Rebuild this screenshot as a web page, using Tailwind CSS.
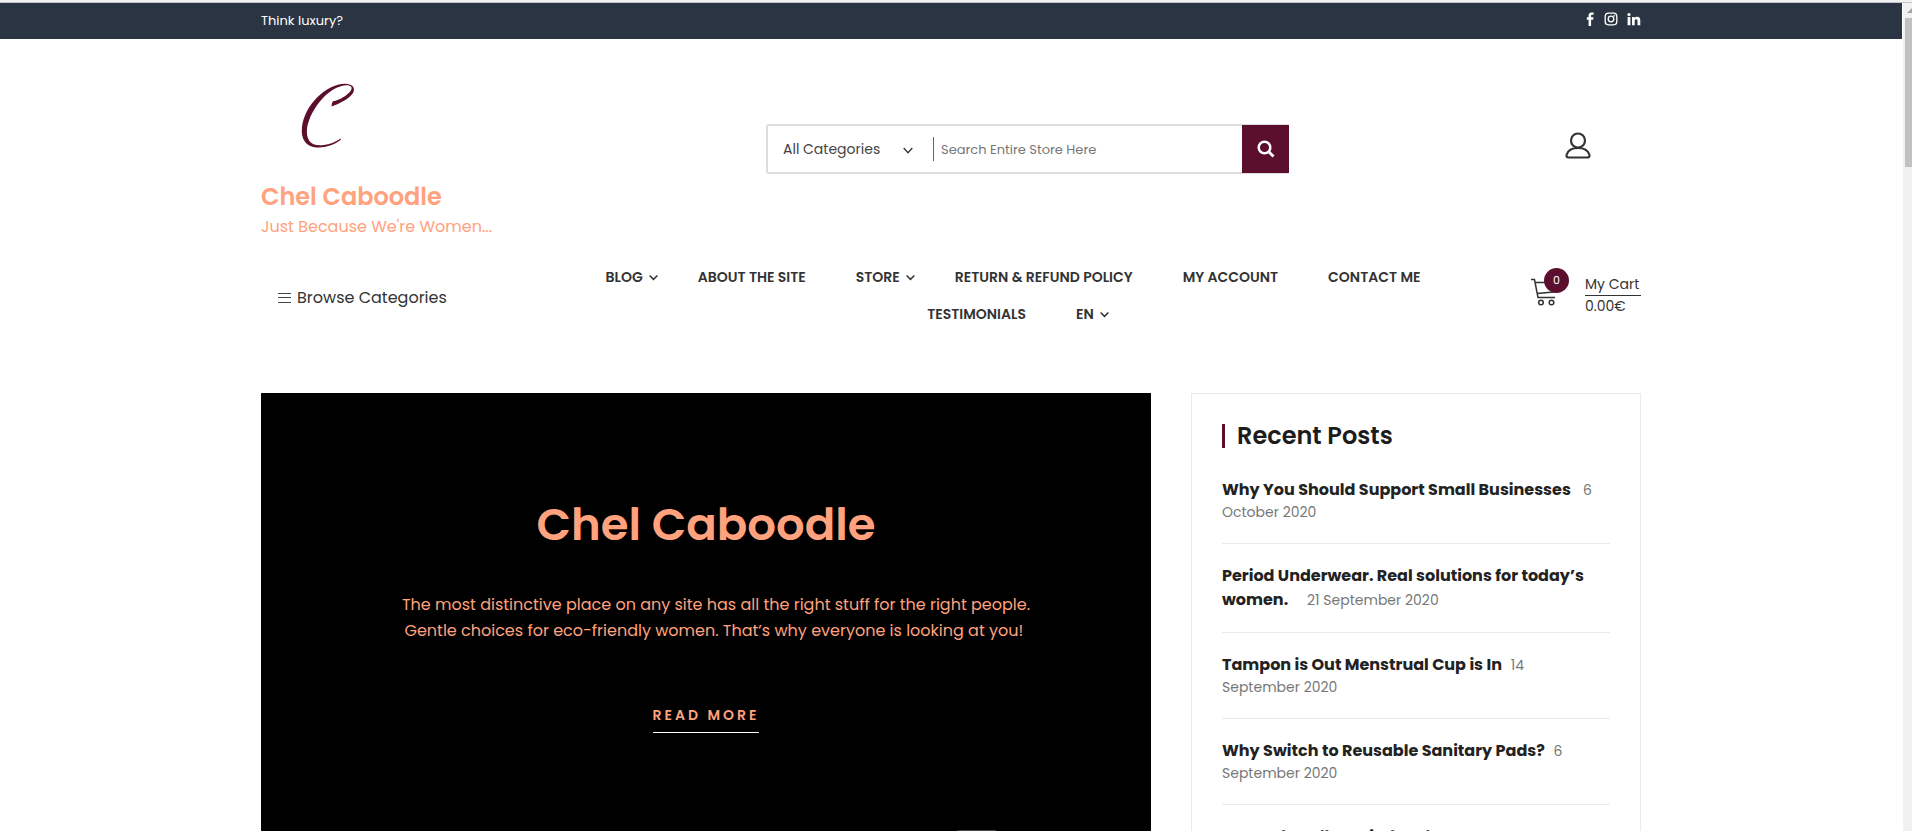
<!DOCTYPE html>
<html lang="en">
<head>
<meta charset="utf-8">
<title>Chel Caboodle</title>
<script src="https://cdn.jsdelivr.net/npm/@tailwindcss/browser@4"></script>
</head>
<body class="flex h-screen flex-col overflow-hidden bg-white font-['Poppins','Inter',sans-serif] text-[#333]">
<div class="h-[3px] shrink-0 border-b border-[#c4c4c8] bg-[#f1f1f4]"></div>
<div class="flex min-h-0 flex-1">
<div class="min-w-0 flex-1 overflow-hidden">
  <div class="h-9 bg-[#2b3442] text-white">
    <div class="mx-auto flex h-full max-w-[1380px] items-center justify-between pb-1">
      <p class="pt-1 text-[13px]">Think luxury?</p>
      <nav aria-label="Social" class="flex items-center gap-[9px]">
        <a href="#" aria-label="Facebook"><svg class="h-[14px] w-[9px]" viewBox="0 0 9 14" fill="currentColor"><path d="M2.6 14V7.8H.8V5.3h1.8V3.5C2.6 1.5 3.8.5 5.7.5c.9 0 1.7.1 1.9.1v2.2H6.3c-1 0-1.2.5-1.2 1.2v1.3h2.400l-.3 2.500H5.100V14z"/></svg></a>
        <a href="#" aria-label="Instagram"><svg class="size-[14px]" viewBox="0 0 14 14" fill="none" stroke="currentColor" stroke-width="1.300"><rect x="1.200" y="1.200" width="11.600" height="11.600" rx="3.200"/><circle cx="7" cy="7" r="2.800"/><circle cx="10.300" cy="3.700" r=".5" fill="currentColor" stroke-width=".6"/></svg></a>
        <a href="#" aria-label="LinkedIn"><svg class="size-[14px]" viewBox="0 0 14 14" fill="currentColor"><circle cx="2" cy="2.500" r="1.600"/><path d="M.6 5h2.800v8.200H.6zM5 5h2.600v1.100C8 5.400 8.700 4.800 10 4.800c2.700 0 3.300 1.600 3.300 3.900v4.500h-2.800V9.200c0-.9 0-2-1.300-2S7.700 8.200 7.700 9.100v4.100H5z"/></svg></a>
      </nav>
    </div>
  </div>

  <header class="mx-auto max-w-[1380px]">
    <div class="flex h-[215px] items-start pt-[38px]">
      <div class="w-[505px]">
        <a href="#" aria-label="Chel Caboodle home" class="block h-[96px] pt-px pl-[36px]">
          <svg class="h-[74px] w-[62px]" viewBox="0 0 62 74" fill="#5b0f2d"><path d="M34.500 28.500C34.800 26 35 24.500 36 23.300C43 22 50 17.500 53.500 13C56 9.500 54.500 7 49 7.200C31 8.500 14 31 10.200 49C8.500 61 13 67.300 23 67.300C30 67.300 38 64.500 43.500 60.500C44 61 43.800 61.800 43.300 62.300C37 67 28 70 20 69.500C9 69 3.500 61 5 49C7.500 27 29 6 48 5.700C56.500 6 58.500 10 56 15C52.500 20.500 43 25.500 34.500 28.500Z"/></svg>
        </a>
        <h1 class="text-2xl leading-[48px] font-semibold text-[#ffa27d]"><a href="#">Chel Caboodle</a></h1>
        <p class="text-base leading-3 text-[#ffa27d]">Just Because We're Women...</p>
      </div>
      <form class="mt-[47px] flex h-[50px] w-[523px] rounded-[3px] border-2 border-r-0 border-[#ddd]">
        <div class="relative w-[165px]">
          <select aria-label="Category" class="h-full w-full appearance-none bg-white pl-[15px] text-sm text-[#444]"><option>All Categories</option></select>
          <svg class="pointer-events-none absolute top-[21px] right-[20px] h-[7px] w-[10px]" viewBox="0 0 10 7" fill="none" stroke="#333" stroke-width="1.300"><path d="M.7 1 5 5.700 9.300 1"/></svg>
        </div>
        <span class="my-[11px] w-px bg-[#666]"></span>
        <input type="search" aria-label="Search" placeholder="Search Entire Store Here" class="min-w-0 flex-1 px-[7px] pt-0.5 text-[13px] outline-none placeholder:text-[#777]">
        <button type="button" aria-label="Search" class="-my-px flex w-[47px] items-center justify-center bg-[#5b0f2d]"><svg class="size-[18px]" viewBox="0 0 18 18" fill="none" stroke="#fff"><circle cx="7.500" cy="7.500" r="5.800" stroke-width="2.500"/><path d="m11.800 11.800 4.700 4.700" stroke-width="3"/></svg></button>
      </form>
      <a href="#" aria-label="Account" class="mt-[54px] mr-[50px] ml-auto"><svg class="h-[28px] w-[26px]" viewBox="0 0 26 28" fill="none" stroke="#333" stroke-width="2.200"><circle cx="13" cy="9.500" r="7"/><path d="M3.500 26.500h19c2 0 2.300-1.500 1.800-3C23 19.500 18.500 17 13 17S3 19.500 1.700 23.500c-.5 1.500-.2 3 1.800 3z"/></svg></a>
    </div>
    <div class="flex h-[139px] items-start">
      <button type="button" class="mt-[32px] flex w-[276px] items-center gap-[6px] pl-[17px] text-base leading-6"><svg class="h-[12px] w-[13px]" viewBox="0 0 13 12" stroke="#444"><path d="M0 1.500h13M0 5.500h13M0 10.500h13"/></svg>Browse Categories</button>
      <nav aria-label="Main" class="flex flex-1 flex-wrap justify-center gap-x-[50px] pt-[5px] pl-7 text-sm leading-[37px] font-semibold">
        <a href="#" class="-mr-2.5 flex items-center gap-[6px]">BLOG<svg class="h-[7px] w-[9px]" viewBox="0 0 9 7" fill="none" stroke="currentColor" stroke-width="1.500"><path d="m.6 1.500 3.900 3.900L8.400 1.500"/></svg></a>
        <a href="#">ABOUT THE SITE</a>
        <a href="#" class="-mr-2.5 flex items-center gap-[6px]">STORE<svg class="h-[7px] w-[9px]" viewBox="0 0 9 7" fill="none" stroke="currentColor" stroke-width="1.500"><path d="m.6 1.500 3.900 3.900L8.400 1.500"/></svg></a>
        <a href="#">RETURN &amp; REFUND POLICY</a>
        <a href="#">MY ACCOUNT</a>
        <a href="#">CONTACT ME</a>
        <a href="#">TESTIMONIALS</a>
        <a href="#" class="-mr-2.5 flex items-center gap-[6px]">EN<svg class="h-[7px] w-[9px]" viewBox="0 0 9 7" fill="none" stroke="currentColor" stroke-width="1.500"><path d="m.6 1.500 3.900 3.900L8.400 1.500"/></svg></a>
      </nav>
      <a href="#" class="mt-[14px] flex w-[180px] justify-end gap-4 text-sm">
        <span class="relative h-[40px] w-[38px]">
          <svg class="mt-[10px] h-[28px] w-[28px]" viewBox="0 0 28 28" fill="none" stroke="#333" stroke-width="1.500"><path d="M0 1.500h3.500L7 19.500h17M4.300 4.500h20l-2 9.500L6 15.500"/><circle cx="10" cy="24.500" r="2.300"/><circle cx="20.500" cy="24.500" r="2.300"/></svg>
          <span class="absolute top-0 left-[13px] flex size-[25px] items-center justify-center rounded-full bg-[#5b0f2d] text-[11px] text-white">0</span>
        </span>
        <span class="mt-[5px] flex w-14 flex-col"><span class="border-b border-[#333] leading-[22px]">My Cart</span><span class="leading-[21px]">0.00€</span></span>
      </a>
    </div>
  </header>

  <main class="mx-auto flex max-w-[1380px] items-stretch gap-10">
    <article class="relative flex flex-1 flex-col items-center bg-black text-center text-[#ffa27d]">
      <h2 class="mt-[102px] text-[45px] leading-[60px] font-semibold">Chel Caboodle</h2>
      <p class="mt-[37px] pl-5 text-base leading-[26px]">The most distinctive place on any site has all the right stuff for the right people.<br>Gentle choices for eco-friendly women. That’s why everyone is looking at you!&nbsp;</p>
      <a href="#" class="mt-[59px] border-b border-white pb-[5px] text-sm leading-6 font-semibold tracking-[3px]">READ MORE</a>
      <span class="absolute top-[437px] left-[695px] h-10 w-[42px] rounded-sm bg-[#444]"></span>
    </article>
    <aside class="w-[450px] border border-[#eaeaea] px-[30px] pt-[30px] pb-10">
      <h2 class="border-l-[3px] border-[#5b0f2d] pl-3 text-2xl leading-6 font-semibold text-[#1c1c1c]">Recent Posts</h2>
      <ul class="mt-[10px] text-sm leading-[21px] text-[#777]">
        <li class="border-b border-[#eaeaea] pt-5 pb-5"><a href="#" class="mr-[5px] text-base leading-6 font-bold text-[#222]">Why You Should Support Small Businesses&nbsp;</a> 6 October 2020</li>
        <li class="border-b border-[#eaeaea] pt-5 pb-5"><a href="#" class="mr-[5px] text-base leading-6 font-bold text-[#222]">Period Underwear. Real solutions for today’s women.&nbsp;&nbsp;&nbsp;</a> 21 September 2020</li>
        <li class="border-b border-[#eaeaea] pt-5 pb-5"><a href="#" class="mr-[5px] text-base leading-6 font-bold text-[#222]">Tampon is Out Menstrual Cup is In</a> 14 September&nbsp;2020</li>
        <li class="border-b border-[#eaeaea] pt-5 pb-5"><a href="#" class="mr-[5px] text-base leading-6 font-bold text-[#222]">Why Switch to Reusable Sanitary Pads?</a> 6 September&nbsp;2020</li>
        <li class="pt-5 pb-5"><a href="#" class="mr-[5px] text-base leading-6 font-bold text-[#222]">How to handle Period Pads</a></li>
      </ul>
    </aside>
  </main>
</div>
<div aria-hidden="true" class="w-[10px] shrink-0 border-l border-white bg-[#f1f1f1] pl-[2px]">
  <svg class="h-[15px] w-[7px]" viewBox="0 0 7 15" fill="#a3a3a3"><path d="M2 10 7 5v5z"/></svg>
  <div class="h-[149px] bg-[#c1c1c1]"></div>
</div>
</div>
</body>
</html>
